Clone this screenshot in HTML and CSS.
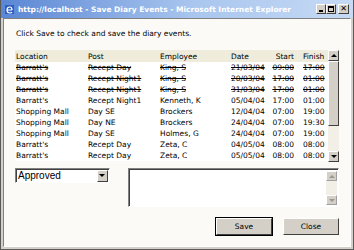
FILE: index.html
```html
<!DOCTYPE html>
<html lang="en">
  <head>
    <meta charset="UTF-8" />
    <title>Save Diary Events</title>
    <link rel="stylesheet" href="styles.css">
  </head>
  <body>
    <div class="window">
      <div class="titlebar">
        <svg class="title-icon" width="11" height="11" viewBox="0 0 11 11">
          <rect x="1" y="1" width="9" height="9" fill="#2f5fc4" />
          <path d="M3 6 h5 M3 6 q0 -3 3 -3 q2 0 2 3 M3 6 q0 3 3 3 q1.5 0 2 -1" stroke="#fff" stroke-width="1.2" fill="none" />
        </svg>
        <span class="title-text">http://localhost - Save Diary Events - Microsoft Internet Explorer</span>
        <div class="title-buttons">
          <span class="tb-btn"><i class="tb-min"></i></span>
          <span class="tb-btn"><i class="tb-max"></i></span>
          <span class="tb-btn tb-close">&#x2715;</span>
        </div>
      </div>
      <div class="client">
        <p class="intro">Click Save to check and save the diary events.</p>

        <div class="grid">
          <table class="events">
            <colgroup>
              <col style="width:72px" /><col style="width:72px" /><col style="width:71px" />
              <col style="width:40px" /><col style="width:28px" /><col style="width:30px" />
            </colgroup>
            <thead>
              <tr><th>Location</th><th>Post</th><th>Employee</th><th>Date</th><th class="start">Start</th><th class="finish">Finish</th></tr>
            </thead>
            <tbody>
              <tr class="deleted"><td>Barratt's</td><td>Recept Day</td><td>King, S</td><td>21/03/04</td><td class="start">09:00</td><td class="finish">17:00</td></tr>
              <tr class="deleted"><td>Barratt's</td><td>Recept Night1</td><td>King, S</td><td>20/03/04</td><td class="start">17:00</td><td class="finish">01:00</td></tr>
              <tr class="deleted"><td>Barratt's</td><td>Recept Night1</td><td>King, S</td><td>31/03/04</td><td class="start">17:00</td><td class="finish">01:00</td></tr>
              <tr><td>Barratt's</td><td>Recept Night1</td><td>Kenneth, K</td><td>05/04/04</td><td class="start">17:00</td><td class="finish">01:00</td></tr>
              <tr><td>Shopping Mall</td><td>Day SE</td><td>Brockers</td><td>12/04/04</td><td class="start">07:00</td><td class="finish">19:00</td></tr>
              <tr><td>Shopping Mall</td><td>Day NE</td><td>Brockers</td><td>24/04/04</td><td class="start">07:00</td><td class="finish">19:30</td></tr>
              <tr><td>Shopping Mall</td><td>Day SE</td><td>Holmes, G</td><td>24/04/04</td><td class="start">07:00</td><td class="finish">19:00</td></tr>
              <tr><td>Barratt's</td><td>Recept Day</td><td>Zeta, C</td><td>04/05/04</td><td class="start">08:00</td><td class="finish">08:00</td></tr>
              <tr><td>Barratt's</td><td>Recept Day</td><td>Zeta, C</td><td>05/05/04</td><td class="start">08:00</td><td class="finish">08:00</td></tr>
            </tbody>
          </table>
          <div class="vscroll">
            <span class="arrow-btn"><i class="tri-up"></i></span>
            <span class="thumb"></span>
            <span class="track"></span>
            <span class="arrow-btn"><i class="tri-down"></i></span>
          </div>
        </div>

        <div class="controls">
          <div class="select">
            <span class="select-value">Approved</span>
            <span class="select-btn"><i class="tri-down"></i></span>
          </div>
          <div class="memo">
            <div class="memo-text"></div>
            <div class="memo-scroll">
              <span class="arrow-btn off"><i class="tri-up"></i></span>
              <span class="track"></span>
              <span class="arrow-btn off"><i class="tri-down"></i></span>
            </div>
          </div>
        </div>

        <div class="actions">
          <button class="btn btn-default">Save</button>
          <button class="btn">Close</button>
        </div>
      </div>
    </div>
  </body>
</html>
```

FILE: styles.css
```css
* {
  padding: 0px;
  margin: 0px;
  box-sizing: border-box;
}
body {
  width: 354px;
  height: 250px;
  overflow: hidden;
  background-color: #3c3c3c;
  font-family: "DejaVu Sans", Verdana, sans-serif;
  font-size: 7.5px;
  color: #000000;
}
.window {
  width: 354px;
  height: 250px;
  background-color: #d4d0c8;
  border: 1px solid #5a5a5a;
  border-top: none;
  padding: 0px 2px 2px 2px;
  display: flex;
  flex-direction: column;
}
.titlebar {
  height: 18px;
  margin: 0px -2px;
  padding: 0px 4px 0px 3px;
  display: flex;
  align-items: center;
  background: linear-gradient(to right, #5a86d4, #a9c6ee 55%, #c6daf5);
}
.title-icon {
  flex: none;
  margin-right: 3px;
}
.title-text {
  flex: 1;
  color: #ffffff;
  font-family: "DejaVu Sans", Verdana, sans-serif;
  font-weight: bold;
  font-size: 7.5px;
  white-space: nowrap;
}
.title-buttons {
  display: flex;
}
.tb-btn {
  width: 10px;
  height: 10px;
  background-color: #d4d0c8;
  border: 1px solid;
  border-color: #ffffff #404040 #404040 #ffffff;
  display: flex;
  align-items: flex-end;
  justify-content: center;
}
.tb-close {
  width: 11px;
  margin-left: 2px;
  align-items: center;
  font-size: 8px;
  font-weight: bold;
  line-height: 8px;
}
.tb-min {
  width: 4px;
  height: 2px;
  background-color: #000000;
  margin-bottom: 1px;
}
.tb-max {
  width: 6px;
  height: 6px;
  border: 1px solid #000000;
  border-top-width: 2px;
  margin-bottom: 1px;
}
.client {
  flex: 1;
  background-color: #fbfaf6;
  border: 1px solid;
  border-color: #808080 #ffffff #ffffff #808080;
  padding: 9px 11px 0px 11px;
}
.intro {
  height: 12px;
  line-height: 12px;
  margin-left: 1px;
}
.grid {
  display: flex;
  margin-top: 10px;
  height: 112px;
}
.events {
  width: 313px;
  table-layout: fixed;
  border-collapse: collapse;
  background-color: #ffffff;
  align-self: flex-start;
}
.events th {
  height: 12px;
  font-weight: normal;
  text-align: left;
  background-color: #efecdb;
  padding-left: 1px;
  white-space: nowrap;
}
.events td {
  height: 11px;
  line-height: 11px;
  padding-left: 1px;
  white-space: nowrap;
  overflow: hidden;
}
.events .start {
  text-align: right;
  padding-right: 4px;
}
.events .finish {
  padding-left: 5px;
}
.deleted td {
  text-decoration: line-through;
}
.vscroll {
  width: 11px;
  display: flex;
  flex-direction: column;
  background-color: #f1efe6;
}
.arrow-btn {
  flex: none;
  width: 11px;
  height: 11px;
  background-color: #d4d0c8;
  border: 1px solid;
  border-color: #ffffff #404040 #404040 #ffffff;
  display: flex;
  align-items: center;
  justify-content: center;
}
.thumb {
  height: 65px;
  background-color: #d4d0c8;
  border: 1px solid;
  border-color: #ffffff #404040 #404040 #ffffff;
}
.track {
  flex: 1;
}
.tri-up {
  width: 0px;
  height: 0px;
  border-left: 3px solid transparent;
  border-right: 3px solid transparent;
  border-bottom: 3px solid #000000;
}
.tri-down {
  width: 0px;
  height: 0px;
  border-left: 3px solid transparent;
  border-right: 3px solid transparent;
  border-top: 3px solid #000000;
}
.off .tri-up {
  border-bottom-color: #9a9890;
}
.off .tri-down {
  border-top-color: #9a9890;
}
.controls {
  display: flex;
  margin-top: 6px;
  gap: 18px;
  align-items: flex-start;
}
.select {
  width: 95px;
  height: 15px;
  display: flex;
  align-items: center;
  background-color: #ffffff;
  border: 1px solid;
  border-color: #808080 #ffffff #ffffff #808080;
  box-shadow: inset 1px 1px 0px #404040;
}
.select-value {
  flex: 1;
  font-family: "Liberation Sans", Arial, sans-serif;
  font-size: 10px;
  padding-left: 2px;
}
.select-btn {
  width: 11px;
  height: 12px;
  margin-right: 1px;
  background-color: #d4d0c8;
  border: 1px solid;
  border-color: #ffffff #404040 #404040 #ffffff;
  display: flex;
  align-items: center;
  justify-content: center;
}
.memo {
  width: 212px;
  height: 39px;
  display: flex;
  background-color: #ffffff;
  border: 1px solid;
  border-color: #808080 #ffffff #ffffff #808080;
  box-shadow: inset 1px 1px 0px #404040;
  padding: 2px 1px 1px 2px;
}
.memo-text {
  flex: 1;
}
.memo-scroll {
  width: 11px;
  display: flex;
  flex-direction: column;
  background-color: #f1efe6;
}
.memo-scroll .arrow-btn {
  height: 10px;
  border-color: #ffffff #a0a0a0 #a0a0a0 #ffffff;
}
.actions {
  display: flex;
  justify-content: flex-end;
  gap: 11px;
  margin-top: 11px;
}
.btn {
  width: 56px;
  height: 17px;
  background-color: #d4d0c8;
  border: 1px solid;
  border-color: #ffffff #404040 #404040 #ffffff;
  font-family: "DejaVu Sans", Verdana, sans-serif;
  font-size: 7.5px;
  color: #000000;
}
.btn-default {
  outline: 1px solid #000000;
}
```
